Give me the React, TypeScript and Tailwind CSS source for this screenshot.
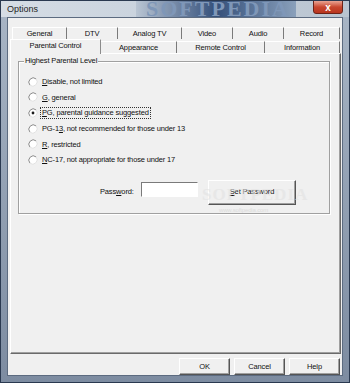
import React from "react";

const ui = "font-['Liberation_Sans',Arial,sans-serif]";

function Radio({ checked = false }: { checked?: boolean }) {
  return (
    <svg width="10" height="10" viewBox="0 0 10 10" className="shrink-0">
      <circle cx="5" cy="5" r="4.2" fill="#fff" />
      <path d="M1.9 8.1 A4.4 4.4 0 0 1 8.1 1.9" fill="none" stroke="#8a8a8a" strokeWidth="1" />
      <path d="M8.1 1.9 A4.4 4.4 0 0 1 1.9 8.1" fill="none" stroke="#e2e2e2" strokeWidth="1" />
      {checked && <circle cx="5" cy="5" r="1.4" fill="#1a1a1a" />}
    </svg>
  );
}

function Tab({ label, w, selected = false }: { label: string; w: string; selected?: boolean }) {
  if (selected) {
    return (
      <div
        className={`${w} relative z-10 -mb-px flex h-[15px] items-center justify-center border-l border-t border-r border-l-white border-t-white border-r-[#8c8c8c] bg-[#f0f0f0] pb-[2px]`}
      >
        {label}
      </div>
    );
  }
  return (
    <div className={`${w} flex h-[12px] items-center justify-center border-t border-r border-t-white border-r-[#7a7a7a]`}>
      {label}
    </div>
  );
}

function Option({ children, checked, focus }: { children: React.ReactNode; checked?: boolean; focus?: boolean }) {
  return (
    <div className="flex h-[15.6px] items-center gap-[2px]">
      <Radio checked={checked} />
      <span className={focus ? "border border-dotted border-[#333] px-[1px] leading-[10px]" : "px-[2px]"}>{children}</span>
    </div>
  );
}

function Btn({ children, w, h }: { children: React.ReactNode; w: string; h: string }) {
  return (
    <div className={`${w} ${h} flex items-center justify-center border border-l-white border-t-white border-r-[#555] border-b-[#555] bg-[#f0f0f0] shadow-[inset_-1px_-1px_0_#a0a0a0]`}>
      {children}
    </div>
  );
}

export default function App() {
  return (
    <div className={`${ui} relative flex h-[383px] w-[350px] flex-col overflow-hidden border border-[#2a3950] bg-gradient-to-b from-[#a9b6c6] to-[#7d8ca1] text-[7.5px] tracking-[-0.15px] text-[#111]`}>
      {/* title bar */}
      <div className="relative flex h-[16px] items-center overflow-hidden bg-gradient-to-r from-[#d6dde5] via-[#c7d1dc] to-[#b9c4d0]">
        <div className="absolute left-[135px] top-0 h-[16px] w-[160px] bg-gradient-to-r from-[#b9c5d3] via-[#35507a] to-[#8aa0bb]" />
        <div className="absolute left-[145px] top-[-4px] font-['Liberation_Serif',serif] text-[22px] leading-[24px] font-bold tracking-[2px] text-[#7f97b8]">
          SOFTPEDIA
        </div>
        <span className="relative ml-[6px] mt-[2px] text-[9px] tracking-normal text-[#1e1e1e]">Options</span>
        <div className="absolute right-[6px] top-[-1px] flex h-[14px] w-[30px] items-center justify-center rounded-b-[3px] border border-[#6b2318] bg-gradient-to-b from-[#e8a393] via-[#c9472f] to-[#b8351e] text-[10px] font-bold text-white">
          x
        </div>
      </div>

      {/* client area */}
      <div className="mx-[6px] mb-[6px] flex flex-1 flex-col border border-[#5c6b80] bg-[#f0f0f0]">
        <div className="ml-[4px] mt-[9px] flex">
          <Tab label="General" w="w-[55px] border-l border-l-white" />
          <Tab label="DTV" w="w-[51px]" />
          <Tab label="Analog TV" w="w-[64px]" />
          <Tab label="Video" w="w-[51px]" />
          <Tab label="Audio" w="w-[51px]" />
          <Tab label="Record" w="w-[56px]" />
        </div>
        <div className="ml-[2px] flex items-end">
          <Tab label="Parental Control" w="w-[91px]" selected />
          <Tab label="Appearance" w="w-[76px]" />
          <Tab label="Remote Control" w="w-[88px]" />
          <Tab label="Information" w="w-[75px]" />
        </div>

        {/* panel */}
        <div className="ml-[2px] flex h-[301px] w-[331px] flex-col border border-l-white border-t-white border-r-[#6a6a6a] border-b-[#6a6a6a] shadow-[inset_-1px_-1px_0_#a0a0a0] px-[7px] pt-[4px]">
          <div className="relative mt-[3px] h-[153px] w-[312px] border border-[#a0a0a0] shadow-[1px_1px_0_#fff,inset_1px_1px_0_#fff]">
            <span className="absolute left-[5px] top-[-6px] bg-[#f0f0f0] px-[1px] leading-[10px]">Highest Parental Level</span>
            <div className="ml-[9px] mt-[12px] flex flex-col">
              <Option>
                <u>D</u>isable, not limited
              </Option>
              <Option>
                <u>G</u>, general
              </Option>
              <Option checked focus>
                <u>P</u>G, parental guidance suggested
              </Option>
              <Option>
                PG-1<u>3</u>, not recommended for those under 13
              </Option>
              <Option>
                <u>R</u>, restricted
              </Option>
              <Option>
                <u>N</u>C-17, not appropriate for those under 17
              </Option>
            </div>
            <div className="mt-[12px] flex items-center">
              <span className="ml-[81px] w-[40px]">
                Pass<u>w</u>ord:
              </span>
              <div className="ml-[1px] mt-[-5px] h-[15px] w-[57px] border border-l-[#7a7a7a] border-t-[#7a7a7a] border-r-white border-b-white bg-white" />
              <div className="relative ml-[10px]">
                <Btn w="w-[88px]" h="h-[25px]">
                  <span>
                    <u>S</u>et Password
                  </span>
                </Btn>
                <span className="absolute left-[-6px] top-[2px] font-['Liberation_Serif',serif] text-[17px] font-bold tracking-[1px] text-[#e2e2e2] opacity-60">
                  SOFTPEDIA
                </span>
              </div>
            </div>
            <div className="ml-[200px] mt-[1px] text-[6px] text-[#dcdcdc]">www.softpedia.com</div>
          </div>
        </div>

        {/* dialog buttons */}
        <div className="mt-[4px] flex justify-end gap-[4px] pr-[2px]">
          <Btn w="w-[51px]" h="h-[17px]">OK</Btn>
          <Btn w="w-[51px]" h="h-[17px]">Cancel</Btn>
          <Btn w="w-[51px]" h="h-[17px]">Help</Btn>
        </div>
      </div>
    </div>
  );
}
